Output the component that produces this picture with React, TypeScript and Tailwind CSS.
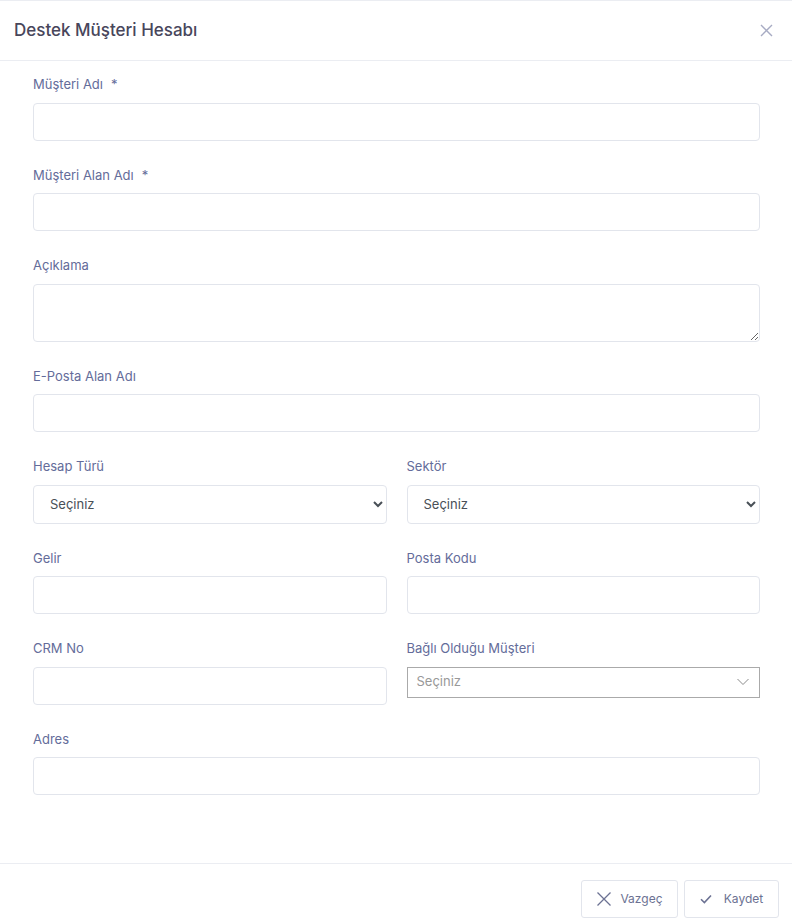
import React from 'react';

const font = { fontFamily: 'Inter, "Noto Sans", sans-serif' };

const inputCls =
  'block w-full h-[38px] rounded-[4px] border border-[#e2e5ec] bg-white px-4 text-[13px] text-[#495057] outline-none';

const Label: React.FC<{ text: string; required?: boolean }> = ({ text, required }) => (
  <label className="block mb-2 text-[13px] leading-[19.5px] text-[#646c9a]">
    {text}
    {required && <span className="ml-2 text-[#646c9a]">*</span>}
  </label>
);

const Field: React.FC<{ label: string; required?: boolean; children: React.ReactNode }> = ({
  label,
  required,
  children
}) => (
  <div className="mb-[25px]">
    <Label text={label} required={required} />
    {children}
  </div>
);

const NativeSelect: React.FC = () => (
  <select className="block w-full h-[39px] rounded-[4px] border border-[#e2e5ec] bg-white pl-3 pr-2 text-[13px] text-[#495057] outline-none">
    <option>Seçiniz</option>
  </select>
);

// select2 style dropdown (square corners, thin chevron)
const ComboBox: React.FC = () => (
  <div className="flex h-[31px] w-full items-center justify-between border border-[#aaaaaa] bg-white pl-[9px] pr-[10px]">
    <span className="text-[13px] text-[#999999]">Seçiniz</span>
    <svg width="12" height="8" viewBox="0 0 12 8" fill="none" stroke="#8a8a8a" strokeWidth="1">
      <path d="M0.5 1 L6 6.5 L11.5 1" />
    </svg>
  </div>
);

const App: React.FC = () => {
  return (
    <div className="w-[792px] h-[923px] bg-white flex flex-col border-t border-[#ebedf2]" style={font}>
      {/* header */}
      <div className="flex h-[60px] shrink-0 items-center justify-between border-b border-[#ebedf2] pl-[14px] pr-[19px]">
        <h5 className="text-[17px] font-medium text-[#48465b]">Destek Müşteri Hesabı</h5>
        <button className="text-[#a7abc3]">
          <svg width="13" height="13" viewBox="0 0 13 13" fill="none" stroke="currentColor" strokeWidth="1.4">
            <path d="M1 1 L12 12 M12 1 L1 12" />
          </svg>
        </button>
      </div>

      {/* body */}
      <div className="flex-1 pl-[33px] pr-[32px] pt-[14px]">
        <Field label="Müşteri Adı" required>
          <input className={inputCls} />
        </Field>
        <Field label="Müşteri Alan Adı" required>
          <input className={inputCls} />
        </Field>
        <Field label="Açıklama">
          <textarea className="block w-full h-[58px] rounded-[4px] border border-[#e2e5ec] bg-white px-4 py-2 text-[13px] outline-none" />
        </Field>
        <Field label="E-Posta Alan Adı">
          <input className={inputCls} />
        </Field>

        <div className="grid grid-cols-2 gap-x-5">
          <Field label="Hesap Türü">
            <NativeSelect />
          </Field>
          <Field label="Sektör">
            <NativeSelect />
          </Field>
          <Field label="Gelir">
            <input className={inputCls} />
          </Field>
          <Field label="Posta Kodu">
            <input className={inputCls} />
          </Field>
          <Field label="CRM No">
            <input className={inputCls} />
          </Field>
          <Field label="Bağlı Olduğu Müşteri">
            <ComboBox />
          </Field>
        </div>

        <Field label="Adres">
          <input className={inputCls} />
        </Field>
      </div>

      {/* footer */}
      <div className="flex h-[60px] shrink-0 items-start justify-end gap-[6px] border-t border-[#ebedf2] pr-[13px] pt-[16px]">
        <button className="flex h-[38px] w-[97px] items-center justify-center gap-[8px] rounded-[3px] border border-[#e2e5ec] bg-white text-[12px] text-[#6c7293]">
          <svg width="16" height="16" viewBox="0 0 16 16" fill="none" stroke="#6c7293" strokeWidth="1.3">
            <path d="M1.5 1.5 L14.5 14.5 M14.5 1.5 L1.5 14.5" />
          </svg>
          Vazgeç
        </button>
        <button className="flex h-[38px] w-[95px] items-center justify-center gap-[12px] rounded-[3px] border border-[#e2e5ec] bg-white text-[12px] text-[#6c7293]">
          <svg width="12" height="10" viewBox="0 0 12 10" fill="none" stroke="#6c7293" strokeWidth="1.6">
            <path d="M1 5.2 L4.4 8.5 L11 1.5" />
          </svg>
          Kaydet
        </button>
      </div>
    </div>
  );
};

export default App;
